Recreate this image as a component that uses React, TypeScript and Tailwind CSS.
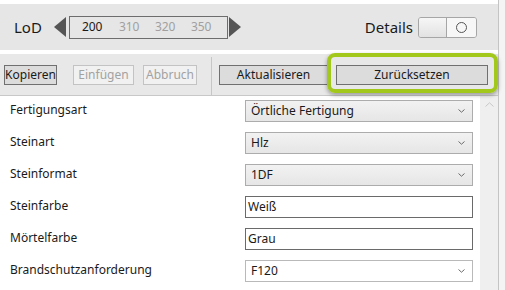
type Field = {
  label: string;
  value: string;
  kind: "select" | "input" | "plain";
};

const fields: Field[] = [
  { label: "Fertigungsart", value: "Örtliche Fertigung", kind: "select" },
  { label: "Steinart", value: "Hlz", kind: "select" },
  { label: "Steinformat", value: "1DF", kind: "select" },
  { label: "Steinfarbe", value: "Weiß", kind: "input" },
  { label: "Mörtelfarbe", value: "Grau", kind: "input" },
  { label: "Brandschutzanforderung", value: "F120", kind: "plain" },
];

const lods = ["200", "310", "320", "350"];

function Chevron() {
  return (
    <svg width="7" height="4" viewBox="0 0 7 4" className="shrink-0">
      <path d="M0.5 0.5 L3.5 3.2 L6.5 0.5" fill="none" stroke="#6a6a6a" strokeWidth="1" />
    </svg>
  );
}

function Control({ field }: { field: Field }) {
  if (field.kind === "input") {
    return (
      <div className="flex h-[22px] w-[228px] items-center border border-[#6a6a6a] bg-white px-[2px] text-[12px] text-[#1a1a1a]">
        {field.value}
      </div>
    );
  }
  const bg =
    field.kind === "select"
      ? "bg-gradient-to-b from-[#f2f2f2] to-[#e6e6e6] border-[#acacac]"
      : "bg-white border-[#b9b9b9]";
  return (
    <div className={`flex h-[22px] w-[228px] items-center justify-between border pl-[5px] pr-[7px] text-[12px] text-[#1a1a1a] ${bg}`}>
      <span>{field.value}</span>
      <Chevron />
    </div>
  );
}

export default function App() {
  return (
    <div
      className="flex h-[290px] w-[505px] overflow-hidden bg-[#f4f4f4]"
      style={{ fontFamily: '"Noto Sans", "Open Sans", sans-serif' }}
    >
      <div className="relative flex w-[499px] flex-col border-r border-[#c4c4c4] bg-white">
        {/* LoD bar */}
        <div className="mt-[4px] flex h-[46px] items-center bg-[#e6e6e6] pl-[14px] pr-[21px]">
          <span className="text-[15px] text-[#1a1a1a]">LoD</span>
          <div className="ml-[12px] flex items-center">
            <svg width="12" height="20" viewBox="0 0 12 20">
              <path d="M12 0 L0 10 L12 20 Z" fill="#555" />
            </svg>
            <div className="ml-[3px] flex h-[23px] w-[159px] items-center border border-[#6d6d6d] pl-[12px] text-[12px] text-[#a0a0a0]">
              {lods.map((l, i) => (
                <span key={l} className={i === 0 ? "w-[38px] text-[#1a1a1a]" : "w-[37px]"}>
                  {l}
                </span>
              ))}
            </div>
            <svg width="12" height="20" viewBox="0 0 12 20" className="ml-[1px]">
              <path d="M0 0 L12 10 L0 20 Z" fill="#555" />
            </svg>
          </div>
          <span className="ml-auto text-[15px] text-[#1a1a1a]">Details</span>
          <div className="ml-[5px] flex h-[21px] w-[59px] overflow-hidden rounded-[3px] border border-[#a6a6a6]">
            <div className="w-[28px] border-r border-[#a6a6a6] bg-gradient-to-b from-[#f6f6f6] to-[#e2e2e2]" />
            <div className="flex flex-1 items-center justify-center bg-[#f7f7f7]">
              <div className="size-[11px] rounded-full border-[1.5px] border-[#555]" />
            </div>
          </div>
        </div>

        {/* toolbar */}
        <div className="mt-[4px] flex h-[42px] items-center border-b border-[#c8c8c8] bg-[#e8e8e8] pl-[4px] text-[12px]">
          <button className="h-[20px] w-[53px] border border-[#707070] bg-[#dcdcdc] text-[#1a1a1a]">
            Kopieren
          </button>
          <button className="ml-[16px] h-[20px] w-[61px] border border-[#c3c3c3] bg-[#f1f1f1] text-[#a2a2a2]">
            Einfügen
          </button>
          <button className="ml-[9px] h-[20px] w-[54px] border border-[#c3c3c3] bg-[#f1f1f1] text-[#a2a2a2]">
            Abbruch
          </button>
          <div className="ml-[14px] h-[38px] w-px self-end bg-[#c6c6c6]" />
          <button className="ml-[7px] h-[20px] w-[109px] border border-[#707070] bg-[#dcdcdc] text-[#1a1a1a]">
            Aktualisieren
          </button>
          <button className="ml-[8px] h-[20px] w-[152px] border border-[#707070] bg-[#dcdcdc] text-[#1a1a1a]">
            Zurücksetzen
          </button>
        </div>

        {/* highlight around reset */}
        <div className="absolute left-[327px] top-[53px] h-[40px] w-[171px] rounded-[8px] border-[4px] border-[#a3c81c] shadow-[0_2px_4px_rgba(0,0,0,0.35)]" />

        {/* fields */}
        <div className="flex flex-1">
          <div className="flex w-[480px] flex-col gap-[10px] pt-[4px]">
            {fields.map((f) => (
              <div key={f.label} className="flex h-[22px] items-center pl-[10px]">
                <span className="w-[235px] -translate-y-px text-[12px] text-[#1a1a1a]">{f.label}</span>
                <Control field={f} />
              </div>
            ))}
          </div>
          <div className="flex w-[18px] justify-center bg-[#efefef] pt-[6px]">
            <svg width="9" height="5" viewBox="0 0 9 5">
              <path d="M0.5 4.5 L4.5 0.8 L8.5 4.5" fill="none" stroke="#c8c8c8" strokeWidth="1" />
            </svg>
          </div>
        </div>
      </div>
    </div>
  );
}
